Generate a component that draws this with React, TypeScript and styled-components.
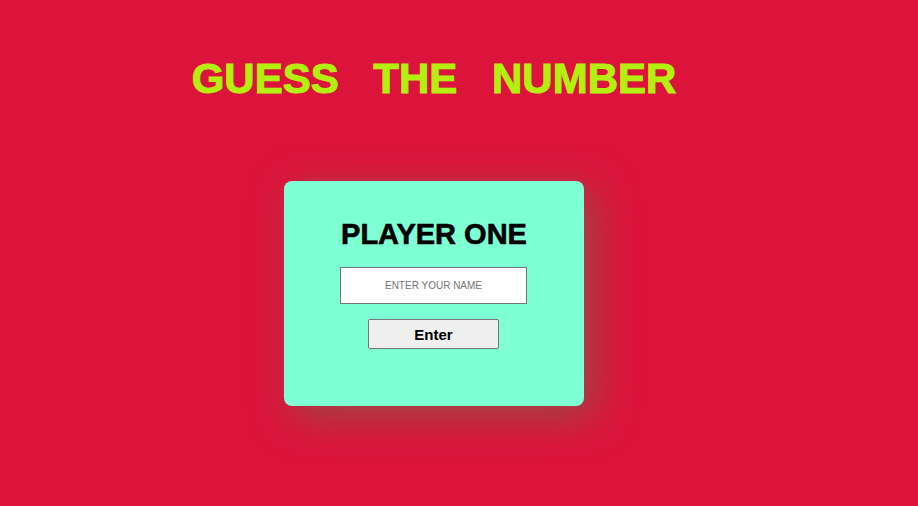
import styled, { createGlobalStyle } from 'styled-components';

const GlobalStyle = createGlobalStyle`
  html, body {
    margin: 0;
    padding: 0;
    background: #dc143c;
    font-family: "Liberation Sans", Arial, sans-serif;
  }
`;

const Page = styled.div`
  width: 868px;
  min-height: 506px;
  display: flex;
  flex-direction: column;
  align-items: center;
  padding-top: 54px;
  box-sizing: border-box;
`;

const Title = styled.h1`
  margin: 0 0 78px;
  font-size: 42px;
  line-height: 49px;
  font-weight: 700;
  color: #b4f00f;
  -webkit-text-stroke: 1px #b4f00f;
  word-spacing: 23px;
`;

const Card = styled.div`
  width: 300px;
  height: 225px;
  box-sizing: border-box;
  padding-top: 37px;
  background: #7fffd4;
  border-radius: 8px;
  box-shadow: 10px 10px 40px rgba(110, 110, 80, 0.6);
  display: flex;
  flex-direction: column;
  align-items: center;
`;

const PlayerHeading = styled.h2`
  margin: 0 0 16px;
  font-size: 29px;
  line-height: 33px;
  font-weight: 700;
  color: #000;
  -webkit-text-stroke: 0.6px #000;
`;

const NameInput = styled.input`
  width: 187px;
  height: 37px;
  box-sizing: border-box;
  border: 1px solid #767676;
  background: #fff;
  text-align: center;
  font-family: "Liberation Sans", Arial, sans-serif;
  font-size: 10px;
  margin: 0 1px 15px 0;
  outline: none;

  &::placeholder {
    color: #757575;
  }
`;

const EnterButton = styled.button`
  width: 131px;
  height: 30px;
  box-sizing: border-box;
  border: 1px solid #767676;
  border-radius: 2px;
  background: #efefef;
  color: #000;
  font-family: "Liberation Sans", Arial, sans-serif;
  font-size: 15px;
  font-weight: 700;
  margin-right: 1px;
  cursor: pointer;
`;

export default function App() {
  return (
    <>
      <GlobalStyle />
      <Page>
        <Title>GUESS THE NUMBER</Title>
        <Card>
          <PlayerHeading>PLAYER ONE</PlayerHeading>
          <NameInput placeholder="ENTER YOUR NAME" />
          <EnterButton>Enter</EnterButton>
        </Card>
      </Page>
    </>
  );
}
